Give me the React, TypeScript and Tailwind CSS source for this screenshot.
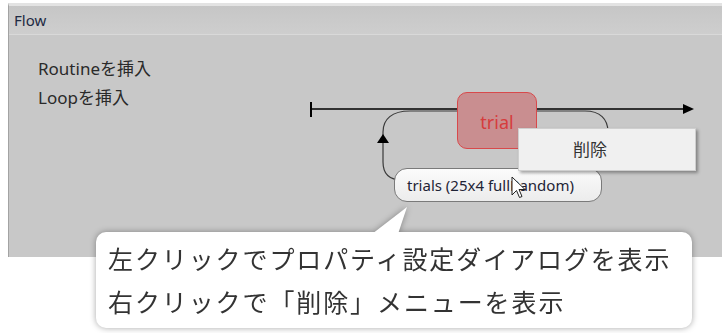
const font = "font-['Noto_Sans','Noto_Sans_CJK_JP',sans-serif]";

const Cursor = () => (
  <svg width="16" height="24" viewBox="0 0 16 24" className="absolute left-[511px] top-[176px]">
    <path
      d="M1 1 L1 19 L5.5 14.5 L8.5 21.5 L11 20.5 L8 13.5 L14 13.5 Z"
      fill="#fff"
      stroke="#222"
      strokeWidth="1"
      strokeLinejoin="round"
    />
  </svg>
);

const FlowDiagram = () => (
  <svg width="722" height="333" className="absolute left-0 top-0 pointer-events-none">
    {/* main flow line */}
    <path d="M311 109 H685" stroke="#000" strokeWidth="1.6" fill="none" />
    <path d="M311 102 V117" stroke="#000" strokeWidth="2" />
    <polygon points="683,104 694,109 683,114" fill="#000" />
    {/* loop */}
    <path
      d="M402 180 C389 180 383 173 383 162 V132 C383 119 392 111 410 111 H585 C600 111 608 119 608 132 V165"
      stroke="#3a3a3a"
      strokeWidth="1.2"
      fill="none"
    />
    <polygon points="377,143 383,134 389,143" fill="#000" />
  </svg>
);

export default function App() {
  return (
    <div className={`relative w-[722px] h-[333px] bg-white overflow-hidden ${font}`}>
      <div className="ml-[8px] mt-[3px] h-[254px] flex flex-col border-l border-[#a3a3a3] border-t-[3px] border-t-[#e3e3e3] bg-[#c8c8c8]">
        <div className="h-[29px] flex items-center px-[5px] bg-gradient-to-b from-[#c6c6c6] to-[#cecece] border-b border-[#d9d9d9] text-[15px] text-[#1e2a44]">
          Flow
        </div>
        <div className="flex-1 pt-[19px] pl-[29px] text-[17px] leading-[29px] text-[#2a2a2a]">
          <div>Routineを挿入</div>
          <div>Loopを挿入</div>
        </div>
      </div>

      <FlowDiagram />

      {/* routine node */}
      <div className="absolute left-[457px] top-[92px] w-[80px] h-[57px] rounded-[10px] border-[1.5px] border-[#d8494b] bg-[#c98e90] flex items-center justify-center pt-[3px] text-[18px] text-[#d63c3d]">
        trial
      </div>

      {/* loop label */}
      <div className="absolute left-[394px] top-[168px] w-[208px] h-[34px] rounded-[13px] border border-[#7a7a7a] bg-gradient-to-b from-[#fbfbfb] to-[#ececec] flex items-center pl-[12px] text-[15px] text-[#1f2436]">
        trials (25x4 fullRandom)
      </div>

      {/* context menu */}
      <div className="absolute left-[518px] top-[128px] w-[178px] h-[43px] bg-[#f0f0f0] border border-[#cfcfcf] shadow-[2px_2px_3px_rgba(0,0,0,0.35)] flex items-center justify-center pr-[34px] text-[17px] text-[#333]">
        削除
      </div>

      <Cursor />

      {/* callout */}
      <div className="absolute left-[96px] top-[207px] drop-shadow-[0_0_3px_rgba(0,0,0,0.35)]">
        <svg width="40" height="27" className="absolute left-[276px] top-0">
          <polygon points="0,27 35,0 26,27" fill="#fff" />
        </svg>
        <div className="mt-[25px] w-[596px] h-[96px] rounded-[10px] bg-white pt-[6px] pl-[12px] text-[25px] leading-[43px] tracking-[1.9px] text-[#333]">
          <div>左クリックでプロパティ設定ダイアログを表示</div>
          <div>右クリックで「削除」メニューを表示</div>
        </div>
      </div>
    </div>
  );
}
